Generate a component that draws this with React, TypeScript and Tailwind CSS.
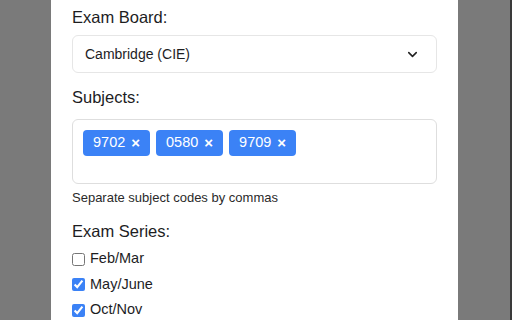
import { ChevronDown } from 'lucide-react';

const subjects = ['9702', '0580', '9709'];

const series = [
  { label: 'Feb/Mar', checked: false },
  { label: 'May/June', checked: true },
  { label: 'Oct/Nov', checked: true },
];

export default function App() {
  return (
    <div className="flex h-[320px] w-[512px] overflow-hidden bg-[#7a7a7a] font-['Liberation_Sans',Arial,sans-serif] text-[#1d1d1f]">
      <div className="w-[51px] shrink-0" />
      <div className="flex w-[407px] shrink-0 flex-col bg-white px-[21px] pt-[7px]">
        <div className="text-[16.5px] leading-5">Exam Board:</div>
        <div className="mt-2 flex h-[40px] items-center justify-between rounded-md border border-[#e6e6e6] pl-[12px] pr-[16px]">
          <span className="text-[14px]">Cambridge (CIE)</span>
          <ChevronDown size={15} strokeWidth={2.5} className="text-[#222]" />
        </div>

        <div className="mt-[14px] text-[16.5px] leading-5">Subjects:</div>
        <div className="mt-3 flex h-[67px] flex-wrap content-start gap-[6px] rounded-md border border-[#dedede] p-[10px]">
          {subjects.map((code) => (
            <span
              key={code}
              className="flex h-[26px] items-center gap-[6px] rounded-[4px] bg-[#3b82f6] px-[10px] text-[14.5px] text-white"
            >
              {code}
              <span className="text-[15px] font-bold">×</span>
            </span>
          ))}
        </div>
        <div className="mt-[6px] text-[13px] leading-4 text-[#2a2a2a]">Separate subject codes by commas</div>

        <div className="mt-[15px] text-[16.5px] leading-5">Exam Series:</div>
        <div className="mt-[8px] flex flex-col gap-[5.5px]">
          {series.map((s) => (
            <label key={s.label} className="flex h-5 items-center gap-[5px] text-[14.5px]">
              <input
                type="checkbox"
                defaultChecked={s.checked}
                className="m-0 h-[13px] w-[13px] accent-[#3b82f6]"
              />
              {s.label}
            </label>
          ))}
        </div>
      </div>
      <div className="flex-1" />
      <div className="w-[2px] bg-[#3a3a3a]" />
    </div>
  );
}
